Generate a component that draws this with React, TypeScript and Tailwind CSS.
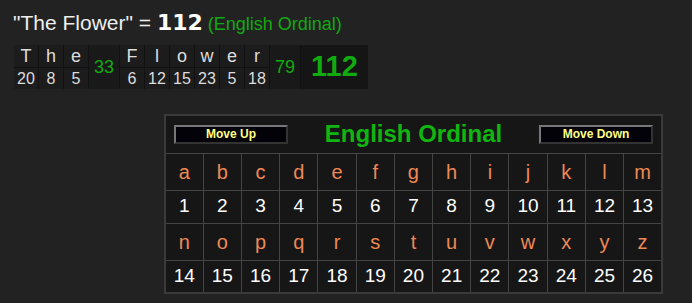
import React from 'react';

const phrase = [
  { word: 'The', letters: [['T', 20], ['h', 8], ['e', 5]] as [string, number][], sum: 33 },
  {
    word: 'Flower',
    letters: [['F', 6], ['l', 12], ['o', 15], ['w', 23], ['e', 5], ['r', 18]] as [string, number][],
    sum: 79,
  },
];

const alphabet = 'abcdefghijklmnopqrstuvwxyz'.split('');
const rows = [alphabet.slice(0, 13), alphabet.slice(13)];

const OldButton: React.FC<{ label: string }> = ({ label }) => (
  <button className="w-[114px] h-[19px] bg-[#020208] border-2 border-t-[#777] border-l-[#777] border-b-[#333] border-r-[#333] text-[12px] font-bold leading-none text-[#ffff88]">
    {label}
  </button>
);

const App: React.FC = () => {
  return (
    <div className="min-h-screen w-full bg-[#222222] text-white font-['Liberation_Sans',Arial,sans-serif] overflow-hidden">
      {/* Phrase heading */}
      <div className="pl-[13px] pt-[11px] h-[36px] leading-6 whitespace-nowrap">
        <span className="text-[21px] text-[#eeeeee]">"The Flower" = </span>
        <span className="text-[22px] font-bold text-white font-['DejaVu_Sans',Verdana,sans-serif]">112</span>
        <span className="text-[18px] text-[#11aa11]"> (English Ordinal)</span>
      </div>

      {/* Letter breakdown */}
      <div className="ml-[14px] mt-[9px] flex w-fit bg-[#191919]">
        {phrase.map((w) => (
          <React.Fragment key={w.word}>
            {w.letters.map(([ch, n], i) => (
              <div key={w.word + i} className="w-[25px] flex flex-col text-center border-r border-[#111]">
                <div className="h-[23px] leading-[23px] text-[18px] text-[#dddddd] bg-[#1c1c1c] border-b border-[#111]">{ch}</div>
                <div className="h-[21px] leading-[21px] text-[16px] text-[#dddddd] bg-[#1c1c1c]">{n}</div>
              </div>
            ))}
            <div className="w-[31px] flex items-center justify-center text-[18px] text-[#11aa11] bg-[#191919] border-r border-[#111]">
              {w.sum}
            </div>
          </React.Fragment>
        ))}
        <div className="w-[67px] flex items-center justify-center text-[29px] font-bold text-[#11aa11] bg-[#151515]">
          112
        </div>
      </div>

      {/* Cipher chart */}
      <table className="ml-[164px] mt-[25px] w-[499px] table-fixed border-collapse bg-[#161616] border-2 border-[#3a3a3a]">
        <tbody>
          <tr>
            <td colSpan={13} className="h-[38px] border border-[#444] px-[8px]">
              <div className="flex items-center justify-between">
                <OldButton label="Move Up" />
                <span className="text-[24px] font-bold text-[#11b511] leading-none">English Ordinal</span>
                <OldButton label="Move Down" />
              </div>
            </td>
          </tr>
          {rows.map((row, r) => (
            <React.Fragment key={r}>
              <tr>
                {row.map((ch) => (
                  <td key={ch} className="h-[37px] border border-[#444] text-center text-[20px] text-[#ee8855]">
                    {ch}
                  </td>
                ))}
              </tr>
              <tr>
                {row.map((ch, i) => (
                  <td key={ch} className="h-[33px] border border-[#444] text-center text-[19px] text-white">
                    {r * 13 + i + 1}
                  </td>
                ))}
              </tr>
            </React.Fragment>
          ))}
        </tbody>
      </table>
    </div>
  );
};

export default App;
